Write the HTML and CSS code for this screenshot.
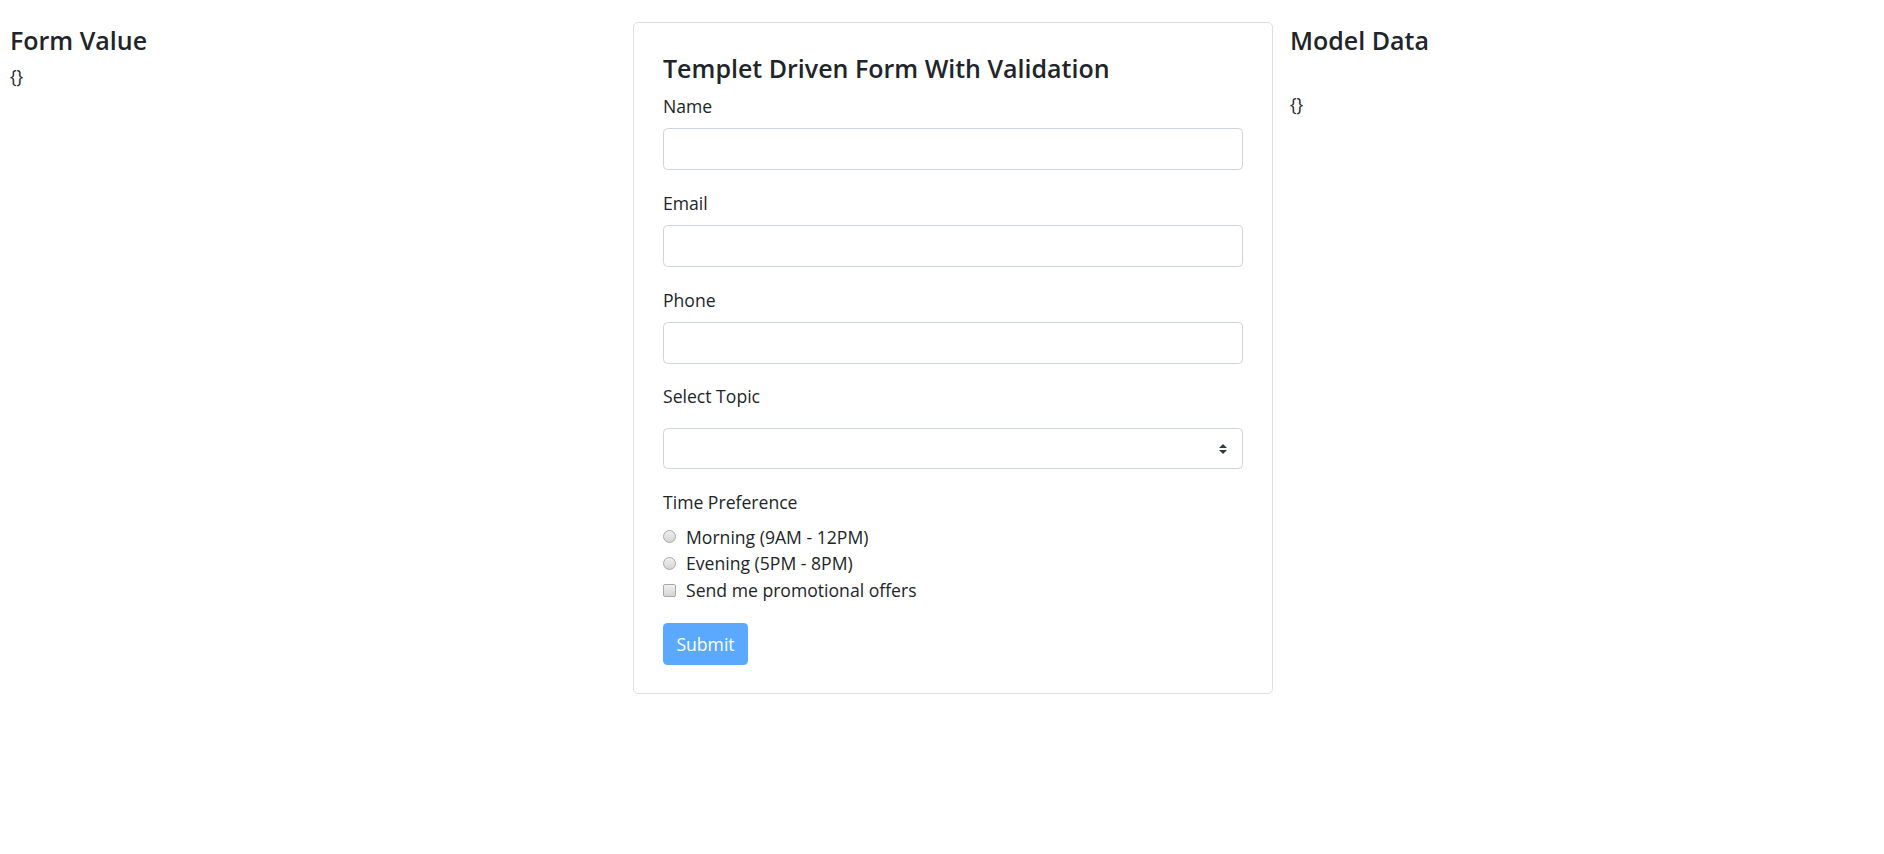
FILE: index.html
```html
<!DOCTYPE html>
<html lang="en">
<head>
<meta charset="utf-8">
<title>Templet Driven Form With Validation</title>
<link rel="stylesheet" href="styles.css">
</head>
<body>
<div class="page">
  <div class="side side-left">
    <h4 class="side-title">Form Value</h4>
    <div class="json">{}</div>
  </div>
  <div class="card">
    <h4 class="card-title">Templet Driven Form With Validation</h4>
    <form class="form">
      <div class="group">
        <label class="label">Name</label>
        <input class="control" type="text">
      </div>
      <div class="group">
        <label class="label">Email</label>
        <input class="control" type="text">
      </div>
      <div class="group">
        <label class="label">Phone</label>
        <input class="control" type="text">
      </div>
      <div class="group">
        <label class="label label-select">Select Topic</label>
        <div class="select-wrap">
          <select class="control select"><option></option></select>
          <svg class="select-arrows" width="8" height="10" viewBox="0 0 8 10"><path d="M4 0 L8 4 L0 4 Z M0 6 L8 6 L4 10 Z" fill="#343a40"/></svg>
        </div>
      </div>
      <div class="group">
        <label class="label">Time Preference</label>
        <label class="check"><span class="radio"></span>Morning (9AM - 12PM)</label>
        <label class="check"><span class="radio"></span>Evening (5PM - 8PM)</label>
        <label class="check"><span class="box"></span>Send me promotional offers</label>
      </div>
      <button class="submit" type="button" disabled>Submit</button>
    </form>
  </div>
  <div class="side side-right">
    <h4 class="side-title">Model Data</h4>
    <div class="json json-model">{}</div>
  </div>
</div>
</body>
</html>
```
FILE: styles.css
```css
* { box-sizing: border-box; }
html, body { margin: 0; padding: 0; background: #fff; }
body {
  font-family: "Open Sans", "Noto Sans", sans-serif;
  font-size: 17.6px;
  line-height: 1.5;
  color: #212529;
}
.page {
  display: flex;
  align-items: flex-start;
  width: 1884px;
}
.side-left {
  flex: 0 0 633px;
  padding-left: 10px;
}
.side-right {
  flex: 1 1 auto;
  padding-left: 17px;
}
.side-title {
  margin: 24px 0 0;
  font-size: 25px;
  font-weight: 600;
  line-height: 32px;
}
.json {
  margin-top: 7px;
  font-size: 17.6px;
  line-height: 26px;
}
.json-model { margin-top: 35px; }
.card {
  flex: 0 0 640px;
  margin-top: 22px;
  border: 1px solid rgba(0,0,0,.13);
  border-radius: 5px;
  padding: 29px 29px 28px;
}
.card-title {
  margin: 0 0 9px;
  font-size: 25px;
  font-weight: 600;
  line-height: 32px;
}
.form { display: flex; flex-direction: column; align-items: stretch; }
.group {
  display: flex;
  flex-direction: column;
  margin-bottom: 19.8px;
}
.label {
  display: block;
  line-height: 26px;
  margin-bottom: 9px;
}
.label-select { margin-bottom: 18.5px; }
.control {
  display: block;
  width: 100%;
  height: 42px;
  border: 1px solid #ced4da;
  border-radius: 4.5px;
  background: #fff;
  font: inherit;
  padding: 6px 13px;
}
.select-wrap { position: relative; }
.select {
  -webkit-appearance: none;
  appearance: none;
  height: 41px;
}
.select-arrows {
  position: absolute;
  right: 16px;
  top: 16px;
  pointer-events: none;
}
.check {
  display: flex;
  align-items: center;
  line-height: 26.6px;
  height: 26.6px;
}
.radio, .box {
  flex: 0 0 13px;
  width: 13px;
  height: 13px;
  margin-right: 10px;
  border: 1px solid #a9a9a9;
  background: linear-gradient(#f0f0f0, #d4d4d4);
}
.radio { border-radius: 50%; }
.box { border-radius: 2px; }
.submit {
  align-self: flex-start;
  width: 85px;
  height: 42px;
  border: 1px solid transparent;
  border-radius: 4.5px;
  background: #5aa9ff;
  color: #fff;
  font: inherit;
  padding: 0;
}
```
